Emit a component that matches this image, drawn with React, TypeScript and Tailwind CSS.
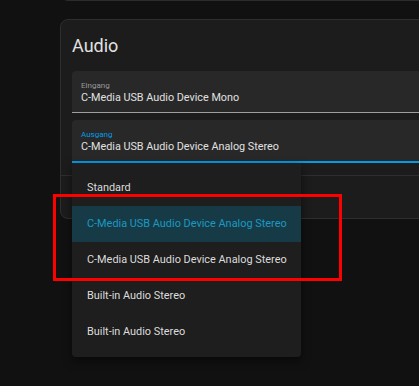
const outputs = [
  "Standard",
  "C-Media USB Audio Device Analog Stereo",
  "C-Media USB Audio Device Analog Stereo",
  "Built-in Audio Stereo",
  "Built-in Audio Stereo",
];

export default function App() {
  return (
    <div className="relative w-[419px] h-[386px] overflow-hidden bg-[#111111] font-['Roboto',sans-serif]">
      {/* end of the card above */}
      <div className="ml-[60px] -mt-[9px] w-[600px] h-[10px] rounded-b-[8px] border border-[#2c2c2c] bg-[#1c1c1c]" />

      {/* Audio card */}
      <div className="ml-[60px] mt-[18px] w-[600px] rounded-[8px] border border-[#2e2e2e] bg-[#1c1c1c]">
        <div className="px-[11px] pt-[14px] pb-[13px]">
          <h2 className="text-[18px] leading-[24px] text-[#e1e1e1]">Audio</h2>
        </div>

        <div className="px-[11px] flex flex-col gap-[7px]">
          <div className="h-[42px] rounded-t-[4px] bg-[#282828] border-b border-[#9e9e9e] px-[9px] pt-[10px]">
            <div className="text-[8px] leading-[10px] text-[#9a9a9a]">Eingang</div>
            <div className="text-[10.8px] leading-[14px] text-[#e1e1e1]">C-Media USB Audio Device Mono</div>
          </div>

          <div className="relative">
            <div className="h-[43px] rounded-t-[4px] bg-[#282828] border-b-2 border-[#039be5] px-[9px] pt-[10px]">
              <div className="text-[8px] leading-[10px] text-[#039be5]">Ausgang</div>
              <div className="text-[10.8px] leading-[14px] text-[#e1e1e1]">C-Media USB Audio Device Analog Stereo</div>
            </div>

            {/* dropdown menu */}
            <div className="absolute left-0 top-full z-10 w-[229px] pt-[7px] pb-[7px] rounded-b-[4px] bg-[#1e1e1e] shadow-[0_4px_10px_rgba(0,0,0,0.5)]">
              {outputs.map((label, i) => (
                <div
                  key={i}
                  className={
                    i === 1
                      ? "h-[36px] flex items-center pl-[15px] pt-[1px] text-[10.9px] bg-[#173b46] text-[#1b98c4]"
                      : "h-[36px] flex items-center pl-[15px] pt-[1px] text-[10.9px] text-[#dcdcdc]"
                  }
                >
                  {label}
                </div>
              ))}
            </div>
          </div>
        </div>

        <div className="mt-[12px] h-[43px] border-t border-[#2e2e2e]" />
      </div>

      {/* annotation */}
      <div className="absolute left-[53px] top-[194px] w-[289px] h-[87px] border-[3px] border-[#ff0000] z-20" />
    </div>
  );
}
